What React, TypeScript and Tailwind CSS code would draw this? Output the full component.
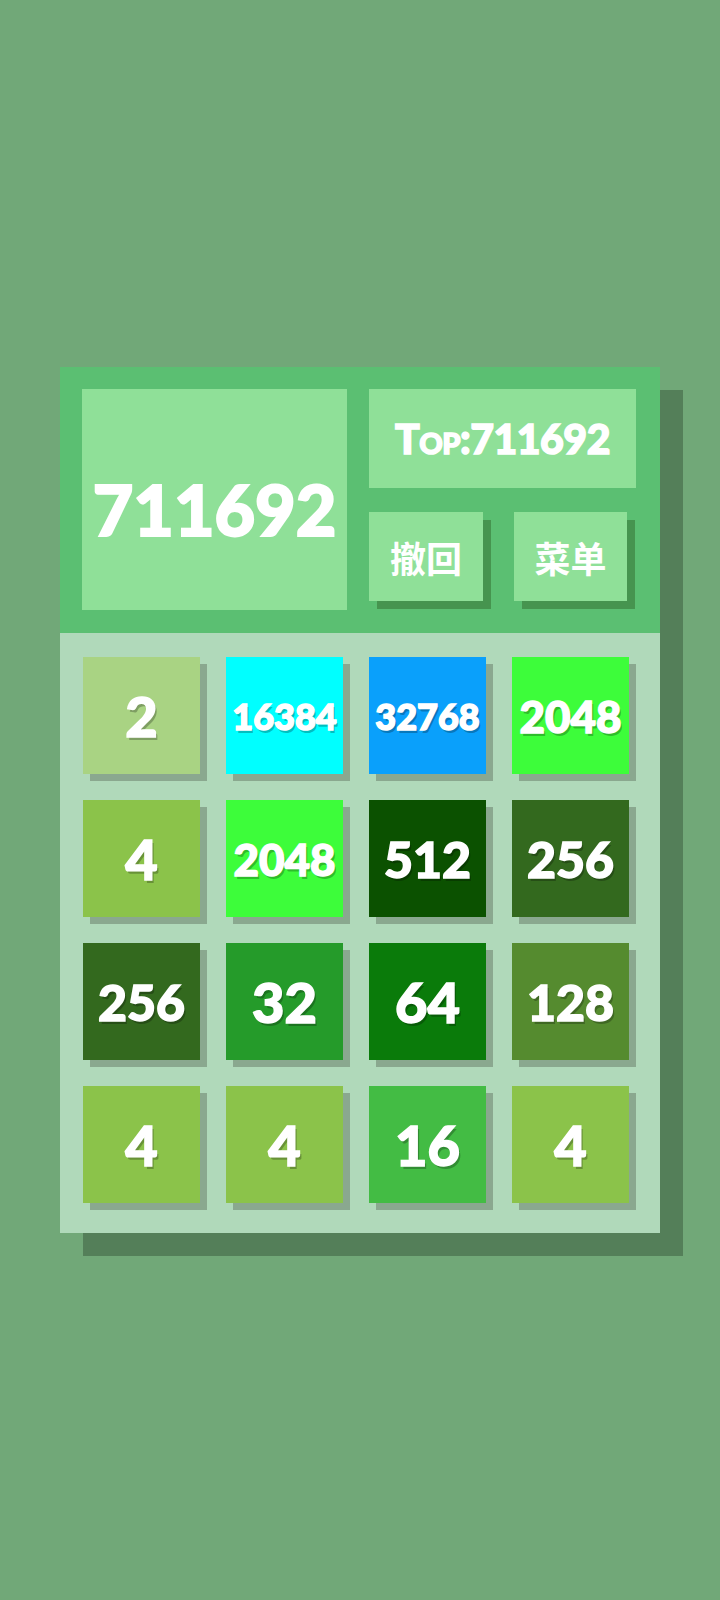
import React from "react";

const tiles: { v: number; bg: string }[] = [
  { v: 2, bg: "bg-[#a9d383]" },
  { v: 16384, bg: "bg-[#00ffff]" },
  { v: 32768, bg: "bg-[#0aa0fb]" },
  { v: 2048, bg: "bg-[#3dfd3a]" },
  { v: 4, bg: "bg-[#8bc34a]" },
  { v: 2048, bg: "bg-[#3dfd3a]" },
  { v: 512, bg: "bg-[#0b5100]" },
  { v: 256, bg: "bg-[#33691e]" },
  { v: 256, bg: "bg-[#33691e]" },
  { v: 32, bg: "bg-[#259b2a]" },
  { v: 64, bg: "bg-[#0a7b0a]" },
  { v: 128, bg: "bg-[#558b2f]" },
  { v: 4, bg: "bg-[#8bc34a]" },
  { v: 4, bg: "bg-[#8bc34a]" },
  { v: 16, bg: "bg-[#43bc44]" },
  { v: 4, bg: "bg-[#8bc34a]" },
];

function sizeFor(v: number) {
  const n = String(v).length;
  if (n <= 2) return "text-[56px]";
  if (n === 3) return "text-[50px]";
  if (n === 4) return "text-[44px]";
  return "text-[36px]";
}

const font = "font-['Lato','Open_Sans',sans-serif]";
const cjk = "font-['Noto_Sans_CJK_SC','Noto_Sans',sans-serif]";

export default function App() {
  return (
    <div className="min-h-[1600px] w-[720px] bg-[#71a878] pt-[367px] pl-[60px]">
      <div className="w-[600px] shadow-[23px_23px_0_#547f59]">
        <div className="h-[266px] bg-[#5bbf72] p-[22px] flex gap-[22px]">
          <div
            className={`w-[265px] h-[221px] bg-[#8fe098] flex items-center justify-center text-white font-black text-[70px] leading-none pt-[18px] [-webkit-text-stroke:2px_white] ${font}`}
          >
            711692
          </div>
          <div className="w-[267px] flex flex-col">
            <div
              className={`h-[99px] bg-[#8fe098] flex items-center justify-center text-white font-black text-[41px] leading-none tracking-[-0.5px] [font-variant:small-caps] [-webkit-text-stroke:1.5px_white] ${font}`}
            >
              Top:711692
            </div>
            <div className="mt-[24px] flex justify-between pr-[9px]">
              <div
                className={`w-[114px] h-[89px] bg-[#8fe098] shadow-[8px_8px_0_#46944f] flex items-center justify-center text-white font-bold text-[36px] leading-none ${cjk}`}
              >
                撤回
              </div>
              <div
                className={`w-[113px] h-[89px] bg-[#8fe098] shadow-[8px_8px_0_#46944f] flex items-center justify-center text-white font-bold text-[36px] leading-none ${cjk}`}
              >
                菜单
              </div>
            </div>
          </div>
        </div>
        <div className="h-[600px] bg-[#b0d9ba] pl-[23px] pt-[24px]">
          <div className="grid grid-cols-[repeat(4,117px)] auto-rows-[117px] gap-x-[26px] gap-y-[26px]">
            {tiles.map((t, i) => (
              <div
                key={i}
                className={`${t.bg} shadow-[7px_7px_0_#8aa88f] flex items-center justify-center text-white font-black leading-none [-webkit-text-stroke:1.5px_white] [text-shadow:2px_3px_0_rgba(0,0,0,0.25)] ${sizeFor(t.v)} ${font}`}
              >
                {t.v}
              </div>
            ))}
          </div>
        </div>
      </div>
    </div>
  );
}
